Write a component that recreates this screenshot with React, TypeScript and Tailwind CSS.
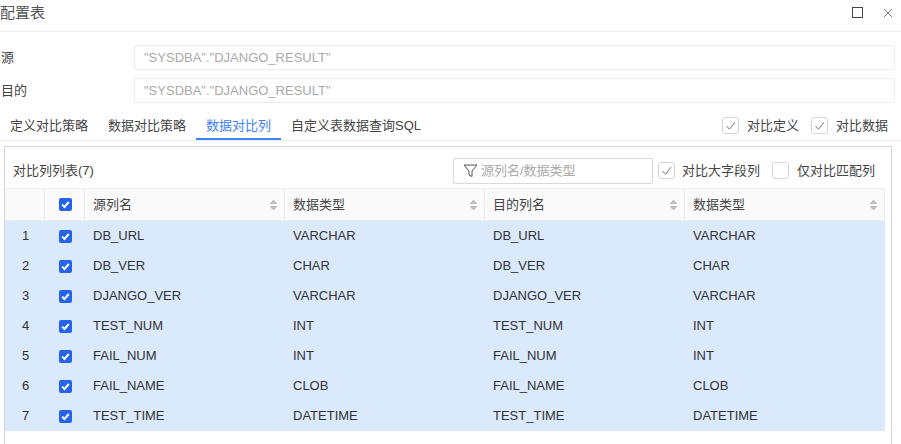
import React from 'react';

const rows = [
  ['DB_URL', 'VARCHAR'],
  ['DB_VER', 'CHAR'],
  ['DJANGO_VER', 'VARCHAR'],
  ['TEST_NUM', 'INT'],
  ['FAIL_NUM', 'INT'],
  ['FAIL_NAME', 'CLOB'],
  ['TEST_TIME', 'DATETIME'],
];

const SortIcon = () => (
  <svg width="9" height="12" viewBox="0 0 9 12" className="shrink-0">
    <path d="M4.5 0.5 L8.5 5 L0.5 5 Z" fill="#bfbfbf" />
    <path d="M0.5 7 L8.5 7 L4.5 11.5 Z" fill="#bfbfbf" />
  </svg>
);

const BlueCheck = () => (
  <span className="flex h-[13px] w-[13px] items-center justify-center rounded-[2px] bg-[#2563eb]">
    <svg width="11" height="11" viewBox="0 0 11 11">
      <path d="M2.2 5.6 L4.5 8 L8.8 3" fill="none" stroke="#fff" strokeWidth="2" />
    </svg>
  </span>
);

const GrayCheck = ({ checked = true }: { checked?: boolean }) => (
  <span className="flex h-[17px] w-[17px] shrink-0 items-center justify-center rounded-[3px] border border-[#d4d4d4] bg-white">
    {checked && (
      <svg width="13" height="13" viewBox="0 0 13 13">
        <path d="M2.5 7 L5.5 10.2 L11 3.2" fill="none" stroke="#666666" strokeWidth="0.9" />
      </svg>
    )}
  </span>
);

const HeaderCell = ({ label }: { label: string }) => (
  <div className="flex w-[200px] items-center justify-between border-r border-[#eeeeee] pl-2 pr-[6px]">
    <span>{label}</span>
    <SortIcon />
  </div>
);

const tabs = ['定义对比策略', '数据对比策略', '数据对比列', '自定义表数据查询SQL'];

export default function App() {
  return (
    <div className="h-[444px] w-[901px] overflow-hidden bg-white font-['Liberation_Sans','Noto_Sans_CJK_SC',sans-serif] text-[13px] text-[#444444]">
      {/* title */}
      <div className="flex h-[32px] items-center justify-between border-b border-[#eeeeee] pb-[6px] pr-[8px]">
        <span className="text-[15px] leading-[20px] text-[#555555]">配置表</span>
        <div className="flex items-center gap-[20px]">
          <svg width="11" height="11" viewBox="0 0 11 11">
            <rect x="0.5" y="0.5" width="10" height="10" fill="none" stroke="#444" />
          </svg>
          <svg width="10" height="10" viewBox="0 0 10 10">
            <path d="M1 1 L9 9 M9 1 L1 9" fill="none" stroke="#555" strokeWidth="0.8" />
          </svg>
        </div>
      </div>

      {/* source and target */}
      <div className="mt-[13px] flex flex-col gap-[8px] pr-[6px]">
        {['源', '目的'].map((label) => (
          <div key={label} className="flex h-[25px] items-center">
            <span className="w-[134px] shrink-0 pl-[1px]">{label}</span>
            <div className="flex h-full flex-1 items-center rounded-[2px] border border-[#eeeeee] pl-[9px] text-[#aaaaaa]">
              "SYSDBA"."DJANGO_RESULT"
            </div>
          </div>
        ))}
      </div>

      {/* tabs */}
      <div className="mt-[8px] flex h-[30px] items-stretch justify-between border-b border-[#eeeeee] pr-[13px]">
        <div className="flex">
          {tabs.map((tab, i) => (
            <div
              key={tab}
              className={
                i === 2
                  ? 'flex items-center border-b-[2px] border-[#3b82f6] px-[10px] pt-[3px] text-[#3b82f6]'
                  : 'flex items-center px-[10px] pt-[1px]'
              }
            >
              {tab}
            </div>
          ))}
        </div>
        <div className="flex items-center gap-[12px]">
          <label className="flex items-center gap-[8px]"><GrayCheck />对比定义</label>
          <label className="flex items-center gap-[8px]"><GrayCheck />对比数据</label>
        </div>
      </div>

      {/* column panel */}
      <div className="ml-[4px] mr-[9px] mt-[5px] h-[300px] border-x border-t border-[#d4d4d4]">
        <div className="flex h-[41px] items-center justify-between pr-[16px] pt-[6px]">
          <span className="pl-[8px]">对比列列表(7)</span>
          <div className="flex items-center">
            <div className="flex h-[26px] w-[200px] items-center gap-[3px] rounded-[2px] border border-[#d9d9d9] pl-[9px] text-[#aaaaaa]">
              <svg width="15" height="15" viewBox="0 0 15 15">
                <path d="M1 2 H14 L9 8 V13.5 L6 12 V8 Z" fill="none" stroke="#555" strokeWidth="1" />
              </svg>
              源列名/数据类型
            </div>
            <label className="ml-[5px] flex items-center gap-[7px]"><GrayCheck />对比大字段列</label>
            <label className="ml-[12px] flex items-center gap-[8px]"><GrayCheck checked={false} />仅对比匹配列</label>
          </div>
        </div>

        <div className="w-[880px]">
          <div className="flex h-[33px] border-y border-[#eeeeee] bg-[#fafafa]">
            <div className="w-[40px] border-r border-[#eeeeee]" />
            <div className="flex w-[40px] items-center justify-center border-r border-[#eeeeee] pl-[1px]"><BlueCheck /></div>
            <HeaderCell label="源列名" />
            <HeaderCell label="数据类型" />
            <HeaderCell label="目的列名" />
            <HeaderCell label="数据类型" />
          </div>
          {rows.map(([name, type], i) => (
            <div key={name} className="flex h-[30px] items-center bg-[#dbe9fd] text-[#333333]">
              <div className="w-[40px] pl-[17px]">{i + 1}</div>
              <div className="flex w-[40px] justify-center"><BlueCheck /></div>
              <div className="w-[200px] pl-[8px]">{name}</div>
              <div className="w-[200px] pl-[8px]">{type}</div>
              <div className="w-[200px] pl-[8px]">{name}</div>
              <div className="w-[200px] pl-[8px]">{type}</div>
            </div>
          ))}
        </div>
      </div>
    </div>
  );
}
